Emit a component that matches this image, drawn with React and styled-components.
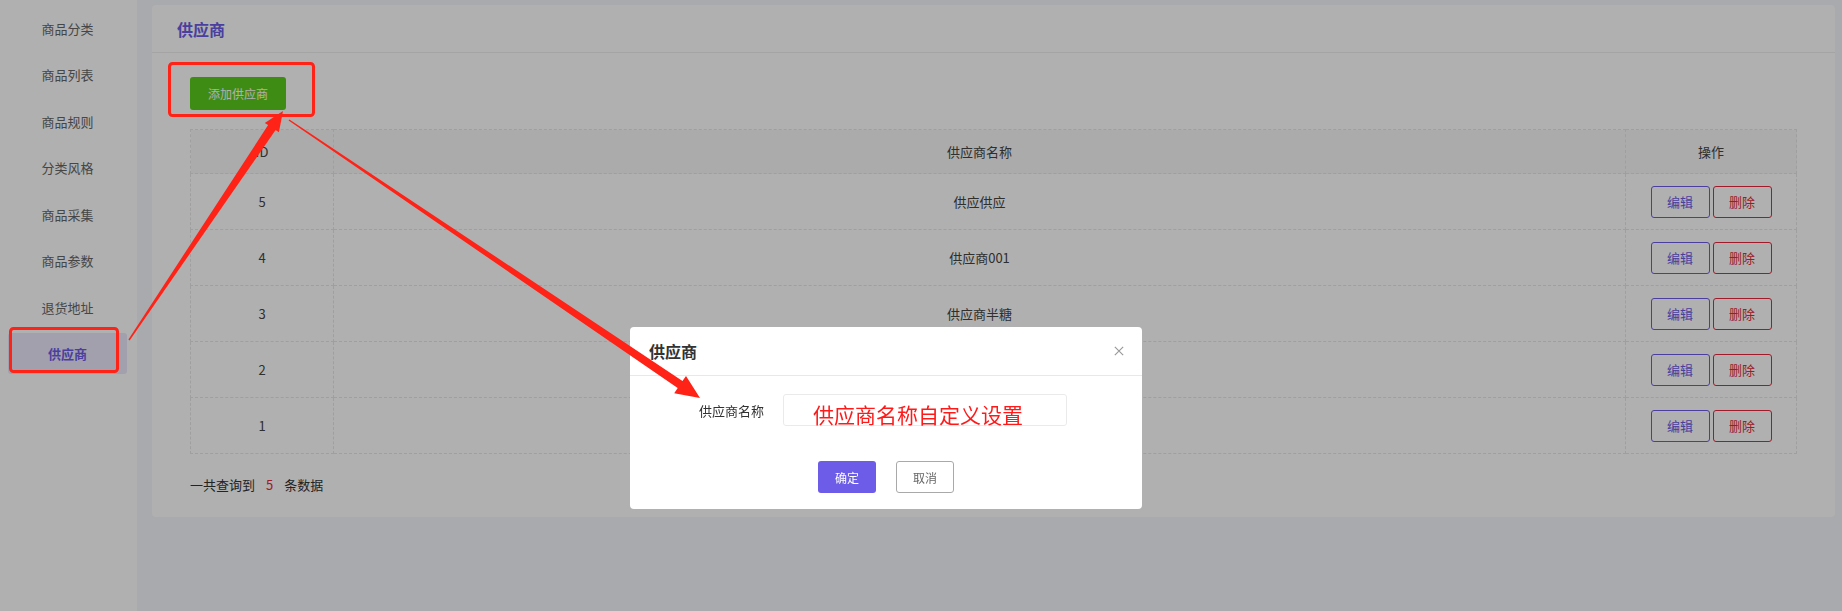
import React from 'react'
import styled, { createGlobalStyle } from 'styled-components'

const GlobalStyle = createGlobalStyle`
  html, body {
    margin: 0;
    padding: 0;
    background: #f5f6fb;
    font-family: "Noto Sans CJK SC", "Noto Sans", sans-serif;
    color: #333;
  }
  * { box-sizing: border-box; }
`

const menu = ['商品分类', '商品列表', '商品规则', '分类风格', '商品采集', '商品参数', '退货地址', '供应商']

const suppliers = [
  { id: 5, name: '供应供应' },
  { id: 4, name: '供应商001' },
  { id: 3, name: '供应商半糖' },
  { id: 2, name: '' },
  { id: 1, name: '' },
]

// tapered arrow, thin at the tail and thick near the head
function arrowPoints(x1, y1, x2, y2, w0, w1, headLen, headW) {
  const dx = x2 - x1
  const dy = y2 - y1
  const len = Math.hypot(dx, dy)
  const ux = dx / len
  const uy = dy / len
  const nx = -uy
  const ny = ux
  const bx = x2 - ux * headLen
  const by = y2 - uy * headLen
  const pts = [
    [x1 + nx * w0 / 2, y1 + ny * w0 / 2],
    [bx + nx * w1 / 2, by + ny * w1 / 2],
    [bx + nx * headW, by + ny * headW],
    [x2, y2],
    [bx - nx * headW, by - ny * headW],
    [bx - nx * w1 / 2, by - ny * w1 / 2],
    [x1 - nx * w0 / 2, y1 - ny * w0 / 2],
  ]
  return pts.map(p => p.map(v => v.toFixed(1)).join(',')).join(' ')
}

export default function App() {
  return (
    <>
      <GlobalStyle />
      <Layout>
        <Sidebar>
          {menu.map((m, i) => (
            <NavItem key={m} $active={i === menu.length - 1}>{m}</NavItem>
          ))}
        </Sidebar>
        <Main>
          <Card>
            <CardHeader>供应商</CardHeader>
            <CardBody>
              <AddButton>添加供应商</AddButton>
              <Table>
                <colgroup>
                  <col style={{ width: 143 }} />
                  <col />
                  <col style={{ width: 171 }} />
                </colgroup>
                <thead>
                  <tr>
                    <Th>ID</Th>
                    <Th>供应商名称</Th>
                    <Th>操作</Th>
                  </tr>
                </thead>
                <tbody>
                  {suppliers.map(s => (
                    <tr key={s.id}>
                      <Td>{s.id}</Td>
                      <Td>{s.name}</Td>
                      <Td>
                        <Actions>
                          <OutlineButton $color="#6c5ce7">编辑</OutlineButton>
                          <OutlineButton $color="#e8283c">删除</OutlineButton>
                        </Actions>
                      </Td>
                    </tr>
                  ))}
                </tbody>
              </Table>
              <Total>
                一共查询到<Count>5</Count>条数据
              </Total>
            </CardBody>
          </Card>
        </Main>
      </Layout>

      <Mask />

      <Modal>
        <ModalHeader>
          <ModalTitle>供应商</ModalTitle>
          <CloseIcon viewBox="0 0 12 12">
            <path d="M1 1 L11 11 M11 1 L1 11" stroke="#999" strokeWidth="1.4" fill="none" />
          </CloseIcon>
        </ModalHeader>
        <ModalBody>
          <FormRow>
            <Label>供应商名称</Label>
            <InputBox>供应商名称自定义设置</InputBox>
          </FormRow>
          <ModalFooter>
            <PrimaryButton>确定</PrimaryButton>
            <GhostButton>取消</GhostButton>
          </ModalFooter>
        </ModalBody>
      </Modal>

      <Annotations viewBox="0 0 1842 611" width="1842" height="611">
        <rect x="169.5" y="63.5" width="144" height="52" rx="3" fill="none" stroke="#ff2216" strokeWidth="3" />
        <rect x="10.5" y="328.5" width="107" height="43" rx="3" fill="none" stroke="#ff2216" strokeWidth="3" />
        <polygon points={arrowPoints(129, 340, 283, 111, 1.5, 9, 20, 8.5)} fill="#ff2216" />
        <polygon points={arrowPoints(289, 120, 700, 398, 1.5, 8.5, 24, 10.5)} fill="#ff2216" />
      </Annotations>
    </>
  )
}

const Layout = styled.div`
  display: flex;
  width: 1842px;
  height: 611px;
  overflow: hidden;
`

const Sidebar = styled.div`
  width: 137px;
  flex-shrink: 0;
  background: #fff;
  display: flex;
  flex-direction: column;
  gap: 5.5px;
  padding-top: 7.5px;
`

const NavItem = styled.div`
  height: 41px;
  margin: 0 10px 0 8px;
  display: flex;
  align-items: center;
  justify-content: center;
  font-size: 13px;
  border-radius: 3px;
  color: ${p => (p.$active ? '#6c5ce7' : '#666')};
  font-weight: ${p => (p.$active ? 700 : 400)};
  background: ${p => (p.$active ? '#ece8fb' : 'transparent')};
`

const Main = styled.div`
  flex: 1;
  padding: 5px 7px 0 15px;
`

const Card = styled.div`
  background: #fff;
  border-radius: 4px;
  height: 512px;
`

const CardHeader = styled.div`
  height: 48px;
  border-bottom: 1px solid #eee;
  display: flex;
  align-items: center;
  padding-left: 25px;
  font-size: 16px;
  font-weight: 700;
  color: #6c5ce7;
`

const CardBody = styled.div`
  padding: 24px 38px 0 38px;
`

const AddButton = styled.button`
  width: 96px;
  height: 33px;
  border: none;
  border-radius: 3px;
  background: #5bcb1e;
  color: #fff;
  font-family: inherit;
  font-size: 12px;
  display: block;
  margin-bottom: 19px;
`

const Table = styled.table`
  width: 100%;
  border-collapse: collapse;
  table-layout: fixed;
  font-size: 13px;
  color: #444;
`

const Th = styled.th`
  height: 44px;
  font-weight: 400;
  background: #f8f8f8;
  border: 1px dashed #e6e6e6;
  text-align: center;
  padding: 0;
`

const Td = styled.td`
  height: 56px;
  border: 1px dashed #e6e6e6;
  text-align: center;
  padding: 0;
`

const Actions = styled.div`
  display: flex;
  justify-content: center;
  gap: 3px;
`

const OutlineButton = styled.button`
  width: 59px;
  height: 32px;
  background: transparent;
  border: 1px solid ${p => p.$color};
  color: ${p => p.$color};
  border-radius: 3px;
  font-family: inherit;
  font-size: 13px;
  padding: 0;
`

const Total = styled.div`
  margin-top: 21px;
  font-size: 13px;
  color: #333;
`

const Count = styled.span`
  color: #e8283c;
  margin: 0 11px;
`

const Mask = styled.div`
  position: fixed;
  inset: 0;
  background: rgba(0, 0, 0, 0.31);
`

const Modal = styled.div`
  position: fixed;
  left: 630px;
  top: 327px;
  width: 512px;
  height: 182px;
  background: #fff;
  border-radius: 4px;
  display: flex;
  flex-direction: column;
`

const ModalHeader = styled.div`
  height: 49px;
  border-bottom: 1px solid #e8e8e8;
  display: flex;
  align-items: center;
  justify-content: space-between;
  padding: 0 18px 0 19px;
`

const ModalTitle = styled.div`
  font-size: 16px;
  font-weight: 700;
  color: #333;
`

const CloseIcon = styled.svg`
  width: 10px;
  height: 10px;
`

const ModalBody = styled.div`
  padding-top: 18px;
`

const FormRow = styled.div`
  display: grid;
  grid-template-columns: 134px 284px;
  column-gap: 19px;
  align-items: center;
`

const Label = styled.div`
  text-align: right;
  font-size: 13px;
  color: #333;
`

const InputBox = styled.div`
  height: 32px;
  border: 1px solid #eaeaea;
  border-radius: 3px;
  padding-left: 29px;
  font-size: 21px;
  line-height: 38px;
  color: #ff1a1a;
  white-space: nowrap;
  overflow: visible;
`

const ModalFooter = styled.div`
  display: flex;
  justify-content: center;
  gap: 20px;
  margin-top: 35px;
`

const PrimaryButton = styled.button`
  width: 58px;
  height: 32px;
  border: none;
  border-radius: 3px;
  background: #6c5ce7;
  color: #fff;
  font-family: inherit;
  font-size: 12px;
  padding: 0;
`

const GhostButton = styled.button`
  width: 58px;
  height: 32px;
  border: 1.5px solid #a9a9a9;
  border-radius: 3px;
  background: #fff;
  color: #666;
  font-family: inherit;
  font-size: 12px;
  padding: 0;
`

const Annotations = styled.svg`
  position: fixed;
  left: 0;
  top: 0;
  pointer-events: none;
`
